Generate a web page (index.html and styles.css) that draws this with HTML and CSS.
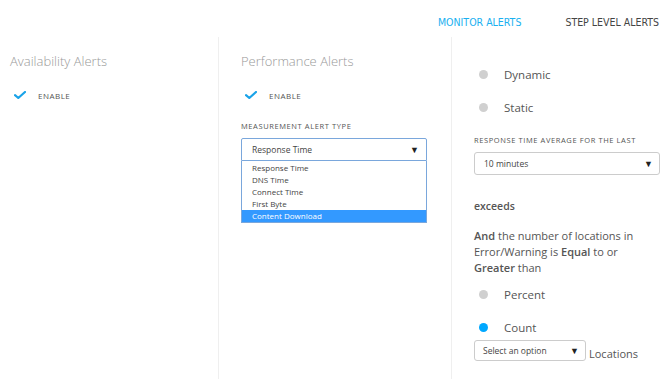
FILE: index.html
```html
<!DOCTYPE html>
<html>
<head>
<meta charset="utf-8">
<link rel="stylesheet" href="styles.css">
</head>
<body>
<div class="tabs">
  <span class="tab active">MONITOR ALERTS</span>
  <span class="tab">STEP LEVEL ALERTS</span>
</div>
<div class="cols">
  <div class="col col1">
    <h2 class="heading">Availability Alerts</h2>
    <div class="enable">
      <svg class="check" width="12" height="8" viewBox="0 0 12 8"><path d="M1 4.2 L4.3 7 L11 1" fill="none" stroke="#1aa3e8" stroke-width="2.2" stroke-linecap="round" stroke-linejoin="round"/></svg>
      <span>ENABLE</span>
    </div>
  </div>
  <div class="col col2">
    <h2 class="heading">Performance Alerts</h2>
    <div class="enable">
      <svg class="check" width="12" height="8" viewBox="0 0 12 8"><path d="M1 4.2 L4.3 7 L11 1" fill="none" stroke="#1aa3e8" stroke-width="2.2" stroke-linecap="round" stroke-linejoin="round"/></svg>
      <span>ENABLE</span>
    </div>
    <div class="label label-mat">MEASUREMENT ALERT TYPE</div>
    <div class="select select-open">
      <span>Response Time</span><span class="arrow">▼</span>
    </div>
    <ul class="options">
      <li>Response Time</li>
      <li>DNS Time</li>
      <li>Connect Time</li>
      <li>First Byte</li>
      <li class="selected">Content Download</li>
    </ul>
  </div>
  <div class="col col3">
    <div class="radio radio-first"><span class="dot"></span><span>Dynamic</span></div>
    <div class="radio"><span class="dot"></span><span>Static</span></div>
    <div class="label label-avg">RESPONSE TIME AVERAGE FOR THE LAST</div>
    <div class="select select-avg">
      <span>10 minutes</span><span class="arrow">▼</span>
    </div>
    <div class="exceeds">exceeds</div>
    <p class="para"><b>And</b> the number of locations in Error/Warning is <b>Equal</b> to or <b>Greater</b> than</p>
    <div class="radio radio-pct"><span class="dot"></span><span>Percent</span></div>
    <div class="radio"><span class="dot dot-on"></span><span>Count</span></div>
    <div class="loc-row">
      <div class="select select-small"><span>Select an option</span><span class="arrow">▼</span></div>
      <span class="loc">Locations</span>
    </div>
  </div>
</div>
</body>
</html>
```

FILE: styles.css
```css
* { box-sizing: border-box; }
html, body { margin: 0; padding: 0; background: #fff; }
body {
  font-family: "Open Sans", "Liberation Sans", sans-serif;
  color: #555;
  width: 669px;
  height: 379px;
  overflow: hidden;
}
.tabs {
  height: 37px;
  display: flex;
  justify-content: flex-end;
  align-items: flex-start;
  padding-top: 16px;
  gap: 44px;
  padding-right: 10px;
}
.tab {
  font-family: "DejaVu Sans Condensed", "Liberation Sans Narrow", "Liberation Sans", sans-serif;
  font-stretch: condensed;
  font-size: 10.5px;
  line-height: 13px;
  color: #444;
}
.tab.active { color: #1ab0f0; }
.cols {
  display: grid;
  grid-template-columns: 218px 233px 1fr;
  height: 342px;
}
.col { border-left: 1px solid #efefef; }
.col1 { border-left: none; padding: 15px 0 0 10px; }
.col2 { padding: 15px 0 0 22px; }
.col3 { padding: 29px 0 0 22px; }
.heading {
  margin: 0;
  font-size: 13px;
  font-weight: 300;
  color: #999;
  line-height: 18px;
}
.enable {
  display: flex;
  align-items: center;
  margin-top: 19px;
  height: 12px;
  padding-left: 4px;
}
.check { display: block; margin-right: 12px; }
.enable span { font-size: 8px; color: #555; letter-spacing: 0.5px; }
.label {
  font-size: 7.5px;
  color: #555;
  letter-spacing: 0.6px;
  line-height: 10px;
}
.label-mat { margin-top: 20px; }
.select {
  display: flex;
  justify-content: space-between;
  align-items: center;
  border: 1px solid #ccc;
  border-radius: 3px;
  font-size: 8.5px;
  color: #444;
}
.arrow { font-size: 9px; color: #222; }
.select-open {
  margin-top: 7px;
  width: 186px;
  height: 23px;
  border-color: #7aa7dc;
  padding: 0 7px 0 10px;
  border-radius: 2px 2px 0 0;
}
.options {
  list-style: none;
  margin: 0;
  padding: 1px 0 0 0;
  width: 186px;
  border: 1px solid #7aa7dc;
  border-top: none;
}
.options li {
  font-size: 8px;
  line-height: 12px;
  height: 12px;
  padding-left: 10px;
  color: #444;
}
.options li.selected { background: #3399ff; color: #fff; }
.radio {
  display: flex;
  align-items: center;
  font-size: 11.5px;
  color: #555;
  height: 16px;
  margin-top: 17px;
}
.radio-first { margin-top: 0; }
.dot {
  width: 9px;
  height: 9px;
  border-radius: 50%;
  background: #d0d0d0;
  margin: 0 16px 0 5px;
}
.dot-on { background: #00a8ff; }
.label-avg { margin-top: 20px; }
.select-avg {
  margin-top: 7px;
  width: 186px;
  height: 23px;
  padding: 0 6px 0 9px;
}
.exceeds {
  margin-top: 24px;
  font-size: 10.5px;
  font-weight: 600;
  color: #555;
}
.para {
  margin: 15px 0 0 0;
  font-size: 11px;
  line-height: 16px;
  color: #555;
  width: 185px;
}
.para b { font-weight: 600; }
.radio-pct { margin-top: 10px; }
.loc-row { display: flex; align-items: flex-end; margin-top: 5px; }
.select-small {
  width: 112px;
  height: 21px;
  padding: 0 6px 0 8px;
  font-size: 8.5px;
}
.loc { font-size: 11px; color: #555; margin-left: 3px; line-height: 14px; }
```
